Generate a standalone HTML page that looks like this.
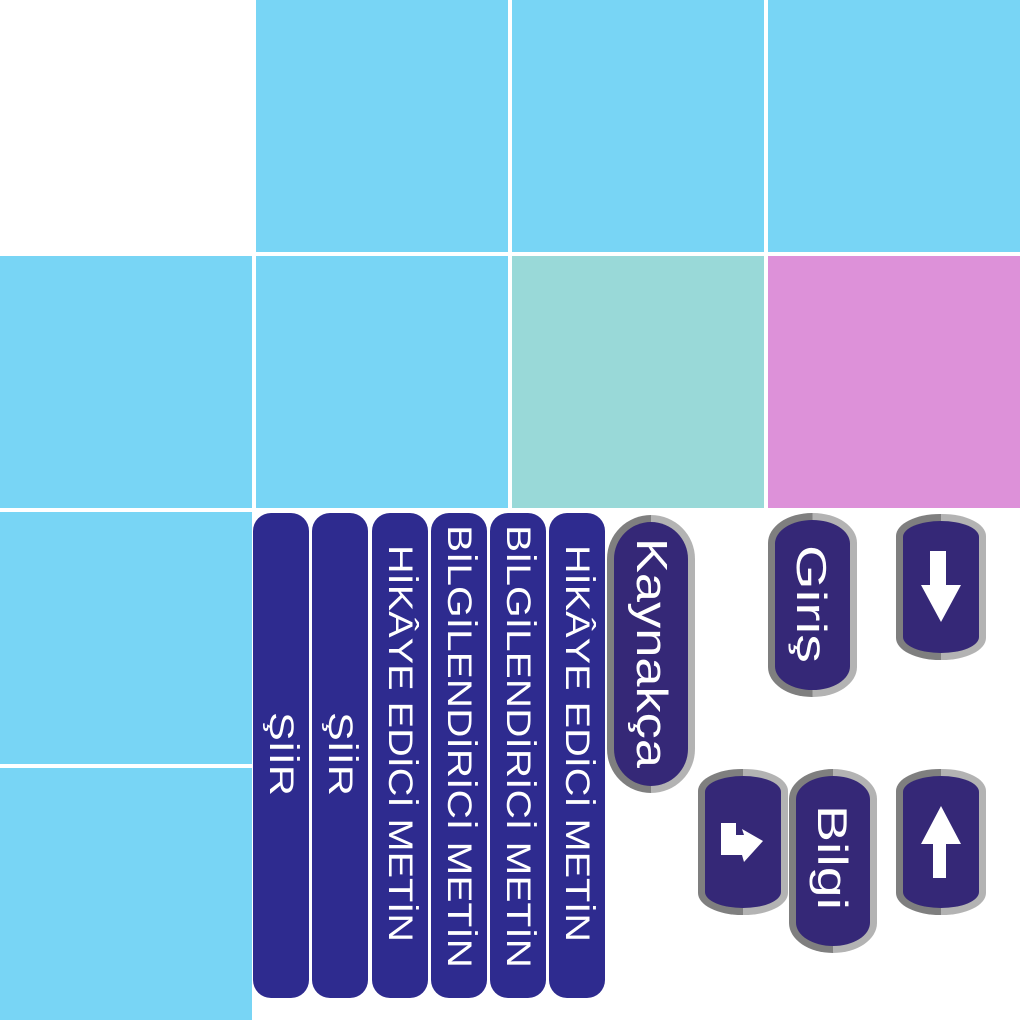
<!DOCTYPE html>
<html><head><meta charset="utf-8"><style>
html,body{margin:0;padding:0;background:#fff;width:1024px;height:1024px;overflow:hidden;position:relative}
.t{position:absolute;width:252px;height:252px;background:#78d5f5}
.bar{position:absolute;top:513px;height:485px;width:56px;background:#2e2b8f;border-radius:18px}
.btn{position:absolute;background:linear-gradient(90deg,#7f7f7f 50%,#b3b3b3 50%);}
.btn .in{position:absolute;left:7px;right:7px;top:7px;bottom:7px;background:#352877}
svg{position:absolute;left:0;top:0}
text{font-family:"Liberation Sans",sans-serif;fill:#fff}
</style></head><body>
<div class="t" style="left:256px;top:0"></div>
<div class="t" style="left:512px;top:0"></div>
<div class="t" style="left:768px;top:0"></div>
<div class="t" style="left:0;top:256px"></div>
<div class="t" style="left:256px;top:256px"></div>
<div class="t" style="left:512px;top:256px;background:#99d9d8"></div>
<div class="t" style="left:768px;top:256px;background:#dd91d9"></div>
<div class="t" style="left:0;top:512px"></div>
<div class="t" style="left:0;top:768px"></div>

<div class="bar" style="left:253px"></div>
<div class="bar" style="left:312px"></div>
<div class="bar" style="left:372px"></div>
<div class="bar" style="left:431px"></div>
<div class="bar" style="left:490px"></div>
<div class="bar" style="left:549px"></div>

<div class="btn" style="left:607px;top:515px;width:88px;height:278px;border-radius:44px"><div class="in" style="border-radius:38px"></div></div>
<div class="btn" style="left:768px;top:513px;width:89px;height:184px;border-radius:44px/30px"><div class="in" style="border-radius:38px/24px"></div></div>
<div class="btn" style="left:896px;top:514px;width:90px;height:146px;border-radius:44px/22px"><div class="in" style="border-radius:38px/16px"></div></div>
<div class="btn" style="left:698px;top:769px;width:90px;height:146px;border-radius:44px/22px"><div class="in" style="border-radius:38px/16px"></div></div>
<div class="btn" style="left:789px;top:769px;width:88px;height:184px;border-radius:44px/30px"><div class="in" style="border-radius:38px/24px"></div></div>
<div class="btn" style="left:896px;top:769px;width:90px;height:146px;border-radius:44px/22px"><div class="in" style="border-radius:38px/16px"></div></div>

<svg width="1024" height="1024" viewBox="0 0 1024 1024">
<g font-size="34">
<text transform="translate(270,712) rotate(90)" textLength="84" lengthAdjust="spacingAndGlyphs">ŞİİR</text>
<text transform="translate(329,712) rotate(90)" textLength="84" lengthAdjust="spacingAndGlyphs">ŞİİR</text>
<text transform="translate(389,545) rotate(90)" textLength="397" lengthAdjust="spacingAndGlyphs">HİKÂYE EDİCİ METİN</text>
<text transform="translate(448,525) rotate(90)" textLength="443" lengthAdjust="spacingAndGlyphs">BİLGİLENDİRİCİ METİN</text>
<text transform="translate(507,525) rotate(90)" textLength="443" lengthAdjust="spacingAndGlyphs">BİLGİLENDİRİCİ METİN</text>
<text transform="translate(566,545) rotate(90)" textLength="397" lengthAdjust="spacingAndGlyphs">HİKÂYE EDİCİ METİN</text>
</g>
<text font-size="44" transform="translate(637,538) rotate(90)" textLength="230" lengthAdjust="spacingAndGlyphs">Kaynakça</text>
<text font-size="42" transform="translate(797,545) rotate(90)" textLength="118" lengthAdjust="spacingAndGlyphs">Giriş</text>
<text font-size="42" transform="translate(818,805) rotate(90)" textLength="105" lengthAdjust="spacingAndGlyphs">Bilgi</text>
<path d="M930,551 H946 V585 H961 L941,622 L921,585 H930 Z" fill="#fff"/>
<path d="M941,806 L961,844 H946 V878 H933 V844 H921 Z" fill="#fff"/>
<path d="M721,823 H736 V835 H744 L742,829 L763,841 L744,862 L742,855 H721 Z" fill="#fff"/>
</svg>
</body></html>
